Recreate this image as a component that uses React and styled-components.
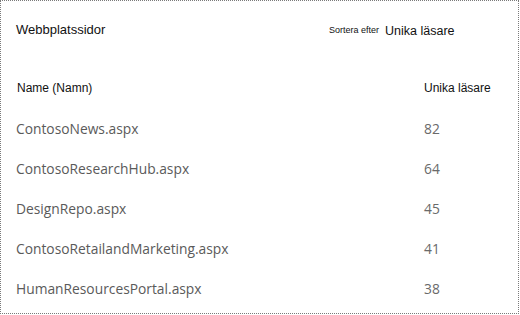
import React from 'react';
import styled, { createGlobalStyle } from 'styled-components';

const GlobalStyle = createGlobalStyle`
    html, body {
        margin: 0;
        padding: 0;
        background: #ffffff;
    }
`;

const pages = [
    { name: 'ContosoNews.aspx', readers: 82 },
    { name: 'ContosoResearchHub.aspx', readers: 64 },
    { name: 'DesignRepo.aspx', readers: 45 },
    { name: 'ContosoRetailandMarketing.aspx', readers: 41 },
    { name: 'HumanResourcesPortal.aspx', readers: 38 },
];

const App = () => {
    return (
        <>
            <GlobalStyle />
            <Panel>
                <Header>
                    <Title>Webbplatssidor</Title>
                    <Sort>
                        <SortLabel>Sortera efter</SortLabel>
                        <SortValue>Unika läsare</SortValue>
                    </Sort>
                </Header>
                <Table>
                    <HeadRow>
                        <HeadCell>Name (Namn)</HeadCell>
                        <HeadCell>Unika läsare</HeadCell>
                    </HeadRow>
                    {pages.map((p) => (
                        <Row key={p.name}>
                            <NameCell>{p.name}</NameCell>
                            <CountCell>{p.readers}</CountCell>
                        </Row>
                    ))}
                </Table>
            </Panel>
        </>
    );
};

const Panel = styled.div`
    box-sizing: border-box;
    width: 519px;
    height: 314px;
    border: 1px dotted #7a7a7a;
    padding: 18px 0 0 15px;
    background: #ffffff;
`;

const Header = styled.div`
    display: grid;
    grid-template-columns: 313px 1fr;
    align-items: center;
    height: 20px;
    margin-bottom: 29px;
`;

const Title = styled.div`
    font-family: "Liberation Sans", Arial, sans-serif;
    font-size: 13px;
    color: #111111;
`;

const Sort = styled.div`
    display: flex;
    align-items: baseline;
    gap: 6px;
    font-family: "Liberation Sans", Arial, sans-serif;
    color: #111111;
`;

const SortLabel = styled.span`
    font-size: 9px;
`;

const SortValue = styled.span`
    font-size: 12.5px;
    position: relative;
    top: 2px;
`;

const Table = styled.div`
    display: flex;
    flex-direction: column;
`;

const Row = styled.div`
    display: grid;
    grid-template-columns: 408px 1fr;
    align-items: center;
    height: 40px;
`;

const HeadRow = styled(Row)`
    padding-left: 1px;
    grid-template-columns: 407px 1fr;
`;

const HeadCell = styled.div`
    font-family: "Liberation Sans", Arial, sans-serif;
    font-size: 12px;
    color: #111111;
`;

const NameCell = styled.div`
    font-family: "Open Sans", "Noto Sans", sans-serif;
    font-size: 13.8px;
    color: #5a5a5a;
`;

const CountCell = styled(NameCell)`
    color: #6a6a6a;
`;

export default App;
